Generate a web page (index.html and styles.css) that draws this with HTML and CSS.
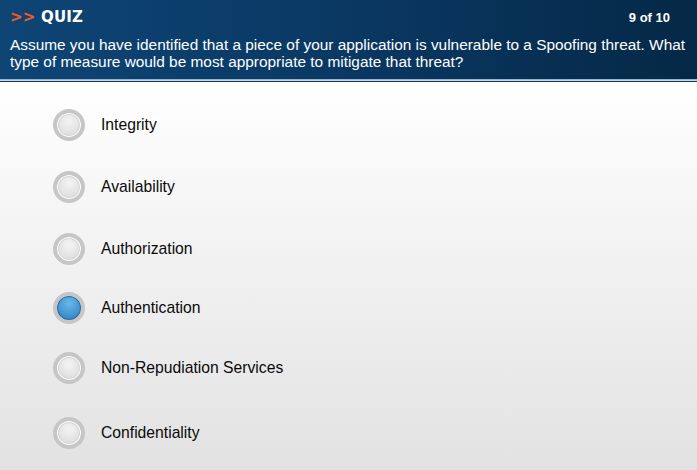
FILE: index.html
```html
<!DOCTYPE html>
<html>
<head>
<meta charset="utf-8">
<link rel="stylesheet" href="styles.css">
</head>
<body>
<div class="page">
  <header class="header">
    <div class="top">
      <div class="title"><span class="arrows">&gt;&gt;</span> QUIZ</div>
      <div class="count">9 of 10</div>
    </div>
    <p class="question">Assume you have identified that a piece of your application is vulnerable to a Spoofing threat. What type of measure would be most appropriate to mitigate that threat?</p>
  </header>
  <div class="rule"></div>
  <ul class="options">
    <li class="opt o1"><span class="radio"></span><span class="label">Integrity</span></li>
    <li class="opt o2"><span class="radio"></span><span class="label">Availability</span></li>
    <li class="opt o3"><span class="radio"></span><span class="label">Authorization</span></li>
    <li class="opt o4"><span class="radio on"></span><span class="label">Authentication</span></li>
    <li class="opt o5"><span class="radio"></span><span class="label">Non-Repudiation Services</span></li>
    <li class="opt o6"><span class="radio"></span><span class="label">Confidentiality</span></li>
  </ul>
</div>
</body>
</html>
```

FILE: styles.css
```css
html, body { margin: 0; padding: 0; }
body {
  width: 697px;
  height: 470px;
  overflow: hidden;
  font-family: "Liberation Sans", Arial, sans-serif;
}
.page {
  height: 470px;
  background: linear-gradient(to bottom, #ffffff 82px, #f6f6f6 200px, #e2e2e2 470px);
}
.header {
  height: 79px;
  box-sizing: border-box;
  padding: 8px 0 0 10px;
  background: linear-gradient(to right, #0e4575 0%, #0a3863 50%, #052846 100%);
  color: #fff;
}
.top {
  display: flex;
  justify-content: space-between;
  align-items: center;
  height: 18px;
  padding-right: 10px;
}
.title {
  font-family: "DejaVu Sans", sans-serif;
  font-weight: bold;
  font-size: 15px;
  letter-spacing: 0.2px;
}
.arrows { color: #f15a24; }
.count {
  font-weight: bold;
  font-size: 13px;
  margin-right: 17px;
}
.question {
  margin: 10px 0 0 0;
  font-size: 15.4px;
  line-height: 17px;
}
.rule {
  height: 3px;
  background: linear-gradient(to bottom, #7fa6c8 0px, #a9c4da 1px, #e6eef5 2px, #1a3550 2px);
}
.options {
  list-style: none;
  margin: 0;
  padding: 27px 0 0 53px;
}
.opt {
  display: flex;
  align-items: center;
  height: 32px;
}
.o2 { margin-top: 30px; }
.o3 { margin-top: 30px; }
.o4 { margin-top: 27px; }
.o5 { margin-top: 28px; }
.o6 { margin-top: 33px; }
.radio {
  width: 32px;
  height: 32px;
  box-sizing: border-box;
  border-radius: 50%;
  border: 4px solid #c6c6c6;
  background: radial-gradient(circle at 50% 35%, #f4f4f4 0%, #dedede 70%, #d0d0d0 100%);
  box-shadow: inset 0 0 0 1px #ffffff, inset 0 0 0 2px #d8d8d8;
  flex: none;
}
.radio.on {
  background: radial-gradient(circle at 50% 30%, #6ab8e6 0%, #3f94cf 60%, #2b6fa8 100%);
  box-shadow: inset 0 0 0 1px #2d6aa0;
}
.label {
  margin-left: 16px;
  font-size: 15.7px;
  color: #0a0a0a;
}
```
